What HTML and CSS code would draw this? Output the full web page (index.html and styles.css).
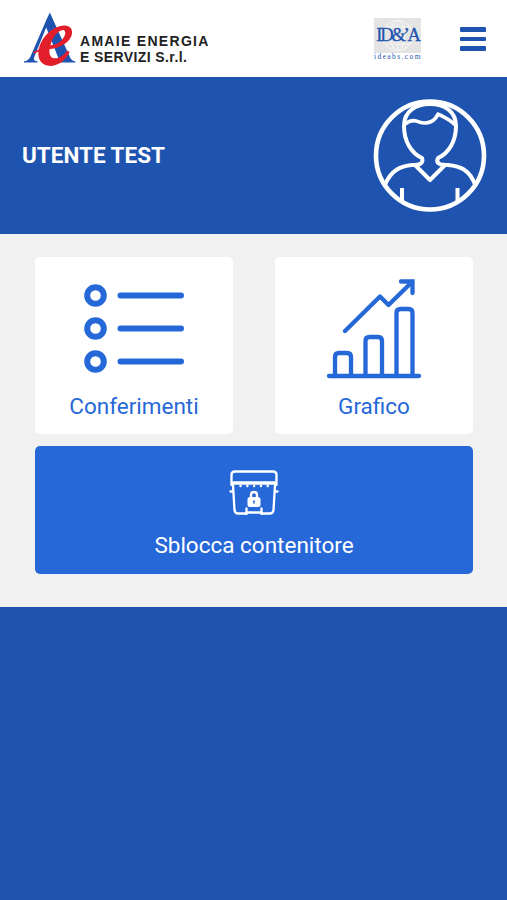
FILE: index.html
```html
<!DOCTYPE html>
<html lang="it">
  <head>
    <meta charset="UTF-8" />
    <meta name="viewport" content="width=device-width, initial-scale=1.0" />
    <title>Amaie Energia e Servizi</title>
    <link rel="stylesheet" href="styles.css">
  </head>
  <body>
    <header class="topbar">
      <div class="brand">
        <svg class="brand-mark" viewBox="25 20 160 165">
          <path fill="#1e54af" d="M106 21 L168 158 Q172 167 183 168 V172 H122 V168 Q136 167 132 159 L95 66 L59 155 Q54 167 69 168 V172 H28 V168 Q41 167 47 155 L96 42 Z" />
          <path fill="#e31e2b" fill-rule="evenodd" d="M166 140 C152 170 125 184 103 182 C80 180 68 160 72 135 C78 100 110 62 150 60 C171 60 177 76 171 92 C163 112 140 127 105 132 C103 150 110 162 127 159 C141 157 152 146 158 136 Z M108 120 C113 97 130 75 146 74 C156 75 154 90 144 102 C135 113 122 119 108 120 Z" />
          <path fill="none" stroke="#e31e2b" stroke-width="6" d="M57 143 Q68 136 82 133" />
        </svg>
        <div class="brand-name">
          <div class="brand-first">AMAIE ENERGIA</div>
          <div class="brand-second">E SERVIZI S.r.l.</div>
        </div>
      </div>
      <div class="partner">
        <div class="partner-box">
          <svg class="partner-globe" viewBox="0 0 47 35">
            <g fill="none" stroke="#f4f4f4" stroke-width="1.2">
              <circle cx="23.5" cy="17.5" r="15" />
              <ellipse cx="23.5" cy="17.5" rx="7" ry="15" />
              <path d="M11 9 H36 M11 26 H36 M23.5 2 V33" />
            </g>
          </svg>
          <span class="partner-name">ID&amp;’A</span>
        </div>
        <div class="partner-site">ideabs.com</div>
      </div>
      <div class="menu">
        <span class="menu-line"></span>
        <span class="menu-line"></span>
        <span class="menu-line"></span>
      </div>
    </header>

    <section class="user">
      <h1 class="user-name">UTENTE TEST</h1>
      <svg class="avatar" viewBox="0 0 114 114">
        <g fill="none" stroke="#fff" stroke-linejoin="round">
          <circle cx="57" cy="56.500" r="54" stroke-width="4.6" />
          <path stroke-width="4" d="M11.500 87 C18 70 29 67 39 66 C46 66 51 65 49 59 C38 54 31 42 31 27 C31 12 43 5 57 5 C71 5 83 12 83 27 C83 42 76 54 65 59 C62 65 68 66 75 66 C86 67 97 70 102.500 87" />
          <path stroke-width="3.6" d="M32 25 C37 21 42 21 46 23 C55 26 62 22 65 15 C71 18 78 21 82 26" />
          <path stroke-width="4" d="M42 66 L57 81 L72 66" />
          <path stroke-width="4" d="M29 89 V102 M84.500 89 V102" />
        </g>
      </svg>
    </section>

    <main class="actions">
      <div class="card">
        <svg class="list-icon" viewBox="0 0 100 90">
          <g fill="none" stroke="#2668d8" stroke-width="6">
            <circle cx="11.500" cy="11.500" r="8.300" />
            <circle cx="11.500" cy="44.500" r="8.300" />
            <circle cx="11.500" cy="77.500" r="8.300" />
            <path stroke-linecap="round" d="M36.500 11.500 H97 M36.500 44.500 H97 M36.500 77.500 H97" />
          </g>
        </svg>
        <span class="card-label">Conferimenti</span>
      </div>
      <div class="card">
        <svg class="chart-icon" viewBox="0 0 96 100">
          <g fill="none" stroke="#2668d8" stroke-width="4.300" stroke-linecap="round" stroke-linejoin="round">
            <path d="M3 97 H93" />
            <path d="M9 97 V78 Q9 74 13 74 H21 Q25 74 25 78 V97" />
            <path d="M39.500 97 V62 Q39.500 58 43.500 58 H52 Q56 58 56 62 V97" />
            <path d="M70.500 97 V34 Q70.500 30 74.500 30 H82.500 Q86.500 30 86.500 34 V97" />
            <path d="M19 52 L54 17.500 L62.500 26 L86 3" />
            <path stroke-linejoin="miter" d="M75 2.500 H86.500 V14" />
          </g>
        </svg>
        <span class="card-label">Grafico</span>
      </div>
      <div class="card card-unlock">
        <svg class="bin-icon" viewBox="0 0 50 46">
          <g fill="none" stroke="#fff" stroke-width="2.3" stroke-linecap="round" stroke-linejoin="round">
            <path d="M2.500 15 V5 Q2.500 1.500 6 1.500 H44 Q47.500 1.500 47.500 5 V15" />
            <path stroke-width="3.400" d="M4 13 H46" />
            <path d="M4 15 L5.500 40 Q6 43.500 9 43.500 H17.500 M32.500 43.500 H41 Q44 43.500 44.500 40 L46 15" />
            <path d="M1.500 21.500 H4 M46 21.500 H48.500 M17.500 44 V38.500 M32.500 44 V38.500 M17.500 42.500 H32.500" />
            <path stroke-width="2.400" stroke-dasharray="0.100 6.700" d="M11.500 16 H40" />
            <path d="M22 28 V25 Q22 22 25 22 Q28 22 28 25 V28" />
          </g>
          <rect x="18.500" y="27" width="13" height="10" rx="2.500" fill="#fff" />
          <path stroke="#2668d8" stroke-width="1.600" stroke-linecap="round" d="M25 31 V33" />
        </svg>
        <span class="card-label">Sblocca contenitore</span>
      </div>
    </main>
  </body>
</html>
```
FILE: styles.css
```css
body {
  margin: 0;
  min-height: 100vh;
  background: #1e54af;
  font-family: Roboto, sans-serif;
}

.topbar {
  display: flex;
  box-sizing: border-box;
  height: 77px;
  padding: 0 21px 0 23px;
  background: #fff;
}
.brand {
  display: flex;
  flex: 1;
}
.brand-mark {
  width: 53px;
  height: 55px;
  margin-top: 12px;
}
.brand-name {
  margin: 33px 0 0 4px;
  color: #222;
  font-family: "Liberation Sans", Arial, sans-serif;
  font-size: 14px;
  font-weight: bold;
  line-height: 16px;
  white-space: nowrap;
}
.brand-first {
  letter-spacing: 1.3px;
}
.brand-second {
  letter-spacing: 0.4px;
}

.partner {
  width: 48px;
  margin: 18px 38px 0 0;
  color: #1e54af;
  font-family: "Liberation Serif", serif;
}
.partner-box {
  display: grid;
  place-items: center;
  width: 47px;
  height: 35px;
  background: #e4e4e4;
}
.partner-globe,
.partner-name {
  grid-area: 1 / 1;
}
.partner-globe {
  width: 47px;
  height: 35px;
}
.partner-name {
  font-size: 18.5px;
  line-height: 35px;
  letter-spacing: -2.2px;
  white-space: nowrap;
  -webkit-text-stroke: 0.3px #1e54af;
}
.partner-site {
  font-size: 7.5px;
  line-height: 8px;
  letter-spacing: 1.4px;
  white-space: nowrap;
}

.menu {
  display: flex;
  flex-direction: column;
  gap: 5px;
  margin-top: 27px;
}
.menu-line {
  width: 26px;
  height: 4.5px;
  border-radius: 1px;
  background: #1e54af;
}

.user {
  display: flex;
  align-items: center;
  justify-content: space-between;
  box-sizing: border-box;
  height: 157px;
  padding: 0 20px 0 22px;
  color: #fff;
}
.user-name {
  margin: 0 0 2px;
  font-size: 22.5px;
  font-weight: 700;
}
.avatar {
  width: 114px;
  height: 114px;
}

.actions {
  display: grid;
  grid-template-columns: 198px 198px;
  grid-template-rows: 177px 128px;
  justify-content: space-between;
  row-gap: 12px;
  box-sizing: border-box;
  height: 373px;
  padding: 23px 34px 0 35px;
  background: #f1f1f1;
}
.card {
  display: flex;
  flex-direction: column;
  align-items: center;
  border-radius: 5px;
  background: #fff;
  color: #2668d8;
}
.card-unlock {
  grid-column: 1 / 3;
  background: #2668d8;
  color: #fff;
}
.card-label {
  font-size: 22.5px;
  line-height: 26px;
}
.list-icon {
  width: 100px;
  height: 90px;
  margin: 27px 0 19px;
}
.chart-icon {
  width: 96px;
  height: 100px;
  margin: 22px 0 14px;
}
.bin-icon {
  width: 50px;
  height: 46px;
  margin: 24px 0 16px;
}
```
